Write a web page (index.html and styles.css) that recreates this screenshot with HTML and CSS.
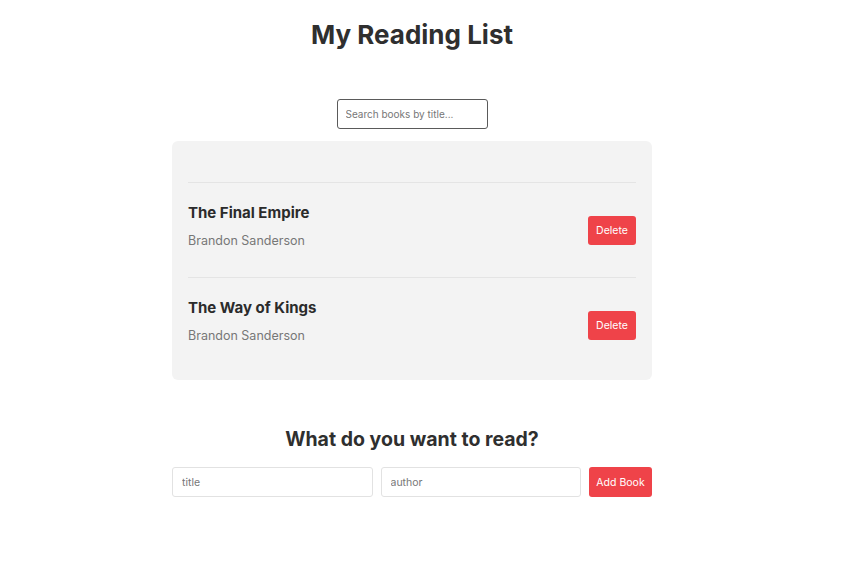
FILE: index.html
```html
<!DOCTYPE html>
<html lang="en">
<head>
<meta charset="utf-8">
<title>My Reading List</title>
<link rel="stylesheet" href="styles.css">
</head>
<body>
<div class="page">
  <h1 class="title">My Reading List</h1>
  <div class="search-row">
    <input class="search" type="text" placeholder="Search books by title...">
  </div>
  <div class="list">
    <div class="item">
      <div class="info">
        <h3 class="book-title">The Final Empire</h3>
        <p class="book-author">Brandon Sanderson</p>
      </div>
      <button class="btn btn-delete">Delete</button>
    </div>
    <div class="item">
      <div class="info">
        <h3 class="book-title">The Way of Kings</h3>
        <p class="book-author">Brandon Sanderson</p>
      </div>
      <button class="btn btn-delete">Delete</button>
    </div>
  </div>
  <h2 class="form-title">What do you want to read?</h2>
  <form class="add-form">
    <input class="field" type="text" placeholder="title">
    <input class="field" type="text" placeholder="author">
    <button class="btn btn-add" type="button">Add Book</button>
  </form>
</div>
</body>
</html>
```

FILE: styles.css
```css
* { box-sizing: border-box; }
body {
  margin: 0;
  padding: 0 22px 0 0;
  background: #fff;
  font-family: Inter, "Noto Sans", sans-serif;
  color: #2f2f2f;
}
.page {
  width: 480px;
  margin: 0 auto;
  padding-top: 18px;
}
.title {
  margin: 0;
  text-align: center;
  font-size: 26px;
  line-height: 34px;
  font-weight: 700;
  color: #2f2f2f;
}
.search-row {
  display: flex;
  justify-content: center;
  margin-top: 47px;
}
.search {
  width: 151px;
  height: 30px;
  border: 1px solid #5a5a5a;
  border-radius: 3px;
  padding: 0 8px;
  font-family: inherit;
  font-size: 10px;
  color: #333;
  outline: none;
}
.search::placeholder, .field::placeholder { color: #777; }
.list {
  margin-top: 12px;
  background: #f3f3f3;
  border-radius: 6px;
  padding: 41px 16px 8px;
}
.item {
  display: flex;
  align-items: center;
  justify-content: space-between;
  border-top: 1px solid #e4e4e4;
  padding: 19px 0 26px;
}
.info { display: flex; flex-direction: column; gap: 8px; }
.book-title {
  margin: 0;
  font-size: 15px;
  line-height: 21px;
  font-weight: 700;
  color: #2b2b2b;
}
.book-author {
  margin: 0;
  font-size: 12.5px;
  line-height: 20px;
  color: #777;
}
.btn {
  border: none;
  border-radius: 3px;
  background: #ef4349;
  color: #fff;
  font-family: inherit;
  font-size: 10.5px;
  cursor: pointer;
}
.btn-delete { width: 48px; height: 29px; margin-top: 8px; padding: 0; }
.form-title {
  margin: 48px 0 0;
  text-align: center;
  font-size: 19.5px;
  line-height: 22px;
  font-weight: 700;
  color: #2f2f2f;
}
.add-form {
  display: flex;
  gap: 8px;
  margin-top: 17px;
}
.field {
  flex: 1;
  height: 30px;
  border: 1px solid #e2e2e2;
  border-radius: 3px;
  padding: 0 9px;
  font-family: inherit;
  font-size: 10.5px;
  outline: none;
}
.btn-add { width: 63px; height: 30px; padding: 0; }
```
